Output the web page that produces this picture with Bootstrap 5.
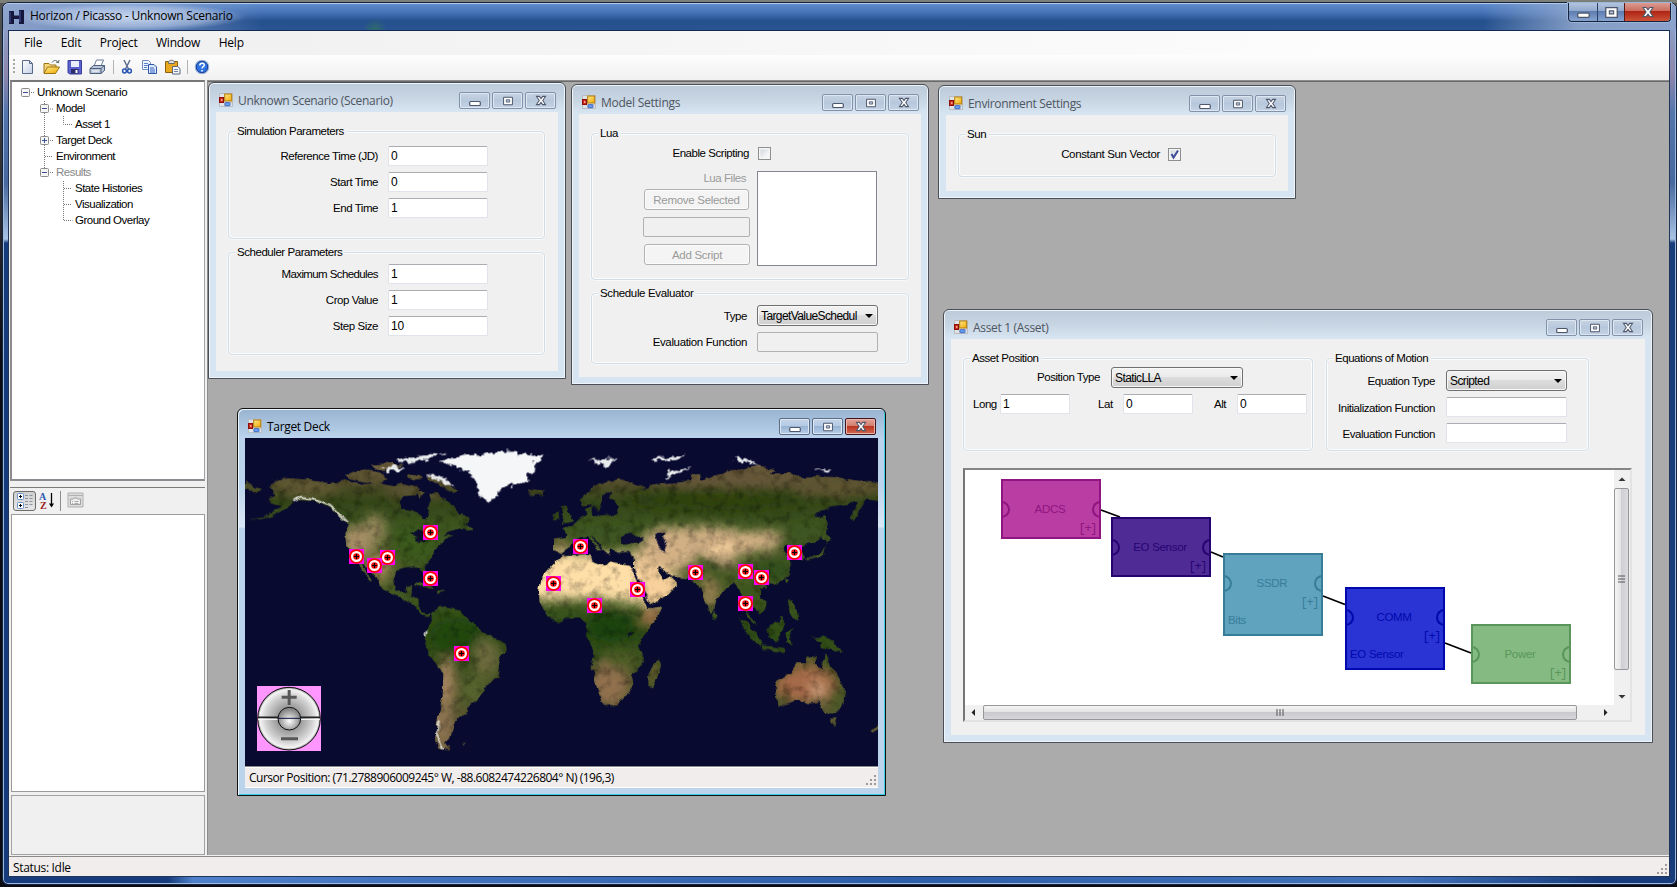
<!DOCTYPE html>
<html lang="en">
<head>
<meta charset="utf-8">
<title>Horizon / Picasso - Unknown Scenario</title>
<link href="https://cdn.jsdelivr.net/npm/bootstrap@5.3.0/dist/css/bootstrap.min.css" rel="stylesheet">
<script src="https://cdn.jsdelivr.net/npm/bootstrap@5.3.0/dist/js/bootstrap.bundle.min.js"></script>
<style>
body{width:1677px;height:887px;overflow:hidden;background:#1b1c26;font:11.5px/16px "Liberation Sans",Arial,sans-serif;letter-spacing:-.45px;color:#000}
.ui{font-family:"Open Sans","Noto Sans",sans-serif;font-size:12px;letter-spacing:-.32px}
.desk{height:887px;padding:2px 0 2px 2px;background:linear-gradient(#7c8078 0 3px,transparent 3px),linear-gradient(#555,#0b0b14 40%)}
.shell{width:1675px;height:883px;border:1px solid #16233c;border-radius:7px 7px 6px 6px;padding:0 6px 7px 5px;
 background:linear-gradient(#8fa8d2 0,#8d9cc4 30px,#8f86ad 70px,#5576ac 110px,#48699f 180px,#a9c3e4 236px,#173c7b 240px,#173c7b 868px,transparent 868px),linear-gradient(90deg,#173c7b 0 165px,#4f80cb 190px,#3f6fb8 500px,#2d5fa8 900px,#4473bb 1400px,#173c7b 1600px);
 box-shadow:inset 0 0 0 1px #9db9e0}
.topbar{height:27px;margin:0 -6px 0 -5px;padding-left:6px;border-radius:6px 6px 0 0;border-top:1px solid #b4cae9;
 background:radial-gradient(ellipse 115px 14px at 128px 13px,rgba(214,226,244,.85),rgba(190,207,235,.55) 70%,transparent),
 radial-gradient(circle 12px at 372px 26px,#2e6a6a,transparent),
 linear-gradient(90deg,rgba(150,170,208,.9) 0,rgba(140,165,210,.6) 150px,transparent 260px,transparent 1480px,rgba(150,172,208,.85) 1575px,#8ba3cc),
 linear-gradient(#5f8bcb 0,#4471b5 9px,#24508d 17px,#2a5594 27px)}
.capt{height:19px;border:1px solid #16233c;border-top:0;border-radius:0 0 4px 4px;margin:-1px 5px 0 0;box-shadow:0 0 0 1px #9cb4d8}
.capt span{display:grid;place-items:center;background:linear-gradient(#b3c4de 0,#91a8cd 45%,#5c7cb0 46%,#87a4d0);border-left:1px solid #2a4068}
.capt span:first-child{border:0;border-radius:0 0 0 4px}
.capt .x{background:linear-gradient(#dc9c91 0,#ca6a5c 45%,#ae2413 46%,#cc5339);border-radius:0 0 4px 0;border-color:#5a1a1a}
.client{width:1662px;height:847px;border:1px solid #1f3558;border-top-color:#122a52;background:#f0f0f0}
.menus{height:24px;background:linear-gradient(90deg,#f0f0f0 150px,#fdfdfd 1400px);padding-left:15px;gap:18.500px}
.menus span{letter-spacing:-.2px}
.tools{height:25px;background:linear-gradient(#fdfdfd,#f1f1f1);padding:0 0 1px 4px;border-radius:0 0 3px 3px}
.tools i{width:1px;height:14px;background:#b4b4b4}
.work{height:776px}
.side{width:196px;padding-left:1px}
.tree{height:401px;width:195px;background:#fff;border:2px solid #6d6f73;border-color:#777 #a2a2a8 #8a8c92 #8b8c90;border-right-width:1px;position:relative}
.tree svg{position:absolute;left:0;top:1px}
.tree div{height:16px;white-space:nowrap;margin-left:-1px;letter-spacing:-.5px}
.tree div:first-of-type{margin-top:2px;letter-spacing:-.4px}
.pgrid{margin-top:6px;border-top:1px solid #7b7b7b;width:195px}
.pgbar{height:26px;padding:3px 0 0 3px}
.pressed{width:23px;height:20px;border:1px solid #6c6c6c;border-radius:3px;background:linear-gradient(#cfcfcf,#e6e6e6)}
.mdi{position:relative;width:1462px;height:775px;border:1px solid #8d8d8d;border-right:0;border-bottom:0;background:#ababab;box-shadow:inset 0 1px #696969;overflow:hidden}
.state{height:20px;background:#f1edec;border-top:1px solid #8a8a8a;padding-left:4px}
.win{position:absolute;border:1px solid #4a4f55;border-radius:6px 6px 0 0;background:linear-gradient(#bccad9 0,#c9d6e4 16px,#d7e4f2 28px);box-shadow:inset 0 0 0 1px #edf4fb;padding:0 7px 7px}
.win.act{border-color:#111;background:linear-gradient(#98b3d1 0,#b9d1ea 28px,#bad2ec 29px,#bbd3ec 75px,#dbe8f5 118px,#bcd3ec 119px);box-shadow:inset 1px 1px #eef6fd,inset -1px -1px #35d0e6}
.bar{height:29px;padding-left:3px;color:#4d5661}
.act .bar{color:#000}
.bar .ttl{margin:10px 0 0 5px}
.bt{width:31px;height:17px;border:1px solid #8491ab;border-radius:2px;margin:9px 0 0 2px;box-shadow:inset 0 0 0 1px #dde7f2;display:grid;place-items:center;background:linear-gradient(#c6d3e2,#b8c8dc 50%,#c3d2e4)}
.bt.last{margin-right:2px}
.act .bt{border-color:#5c6d88;background:linear-gradient(#c3d5ea,#b4c9e2 48%,#98b4d4 50%,#b6cde8)}
.act .bt.x{border-color:#43141c;background:linear-gradient(#e3a497,#d27c6d 48%,#b93520 50%,#d46a51);box-shadow:inset 0 0 0 1px #e9b5aa}
.cl{background:#f0f0f0;height:calc(100% - 29px)}
.grp{border:1px solid #d3dde6;border-radius:4px;box-shadow:inset 0 0 0 1px #fbfcfd,0 0 0 .5px #fff}
.gcap{display:block;width:fit-content;height:16px;margin:-9px 0 0 6px;padding:0 3px 0 2px;background:#f0f0f0}
.frow{display:flex;align-items:center}
.lab{text-align:right;white-space:nowrap}
.tb.form-control{height:20px;min-height:0;padding:0 2px;font-size:12px;line-height:16px;color:#000;border:1px solid #e2e3ea;border-top-color:#abadb3;border-radius:1.5px;background:#fff;flex:none;letter-spacing:-.2px}
.tb.off{border:1px solid #b1b1b4;background:#f0f0f0;border-radius:2px}
.pb.btn{height:21px;padding:0;font-size:11.5px;line-height:18px;letter-spacing:-.3px;border:1px solid #b0b3b6;border-radius:3px;background:#f4f4f4;color:#9a9a9a;opacity:1;box-shadow:inset 0 0 0 1px #fcfcfc}
.combo{height:21px;border:1px solid #707070;border-radius:3px;background:linear-gradient(#f2f2f2,#ebebeb 48%,#dcdcdc 50%,#cfcfcf);box-shadow:inset 0 0 0 1px #f8f8f8;padding:2px 4px 0 3px;font-size:12px;line-height:16px;white-space:nowrap;flex:none;letter-spacing:-.6px}
.combo::after{content:"";float:right;border:4px solid transparent;border-top-color:#000;border-bottom:0;margin-top:6px}
.cb{width:13px;height:13px;border:1px solid #8e8f8f;background:linear-gradient(135deg,#c9cfd6,#f6f6f6 70%);box-shadow:inset 0 0 0 1.5px #f4f4f4;flex:none}
.cb svg{display:block}
.canvas{border:2px solid #696969;border-color:#858585 #e3e3e3 #e3e3e3 #767676;background:#fff;width:669px;height:254px;margin-left:12px;margin-top:17px}
.node{position:absolute;width:100px;border:2px solid;letter-spacing:-.3px;font-size:11.5px}
.node b{font-weight:400;position:absolute;left:0;right:2px;text-align:center;top:20px}
.node em{font-style:normal;position:absolute;right:3px;top:40px;font:12px/16px "Liberation Mono",monospace;letter-spacing:-1.4px}
.node u{text-decoration:none;position:absolute;left:3px;bottom:6px}
.node::before,.node::after{content:"";position:absolute;width:9px;height:17px;border:2px solid currentColor;top:20px}
.node::before{left:-2px;border-left:0;border-radius:0 9px 9px 0}
.node::after{right:-2px;border-right:0;border-radius:9px 0 0 9px}
.vs{width:16px;background:#f0f0f0}
.thumb{border:1px solid #979797;border-radius:2px;display:grid;place-items:center}
</style>
</head>
<body>
<svg width="0" height="0" class="position-absolute">
 <defs>
  <linearGradient id="gy" x2="1" y2="1"><stop stop-color="#ffe98a"/><stop offset="1" stop-color="#f0a800"/></linearGradient>
  <linearGradient id="gw" x2="1" y2="1"><stop stop-color="#fff"/><stop offset="1" stop-color="#c3cfe6"/></linearGradient>
  <symbol id="form" viewBox="0 0 14 14"><path d="M.5 .5h13v13H.5z" fill="#dfe3e8" stroke="#b9bdc2"/><path d="M.5 4.5h4.500M5.500 9.500h8M5.500 0v13" stroke="#c9c4be"/><rect x=".5" y="4.500" width="4" height="5" fill="#c52a1e" stroke="#8d1008"/><rect x="2" y="6" width="1.500" height="2" fill="#ff9a88"/><rect x="5.700" y="1" width="7" height="7" fill="url(#gy)" stroke="#b27d0c"/><rect x="6" y="9.700" width="5" height="3" rx=".5" fill="#6b9df0" stroke="#3d6cc8"/></symbol>
  <symbol id="mn" viewBox="0 0 12 12"><rect x=".7" y="6.500" width="10.600" height="4" rx="1" fill="#fff" stroke="#4d566b" stroke-width="1.200"/></symbol>
  <symbol id="mx" viewBox="0 0 12 12"><path d="M.7 1.500h10.600v9H.7z" fill="#fff" stroke="#4d566b" stroke-width="1.200"/><path d="M4 4.500h4v2.800H4z" fill="#b8c6da" stroke="#4d566b"/></symbol>
  <symbol id="cx" viewBox="0 0 12 12"><path d="M1 1.500h3.200L6 3.900l1.800-2.400H11L7.900 6 11 10.500H7.800L6 8.100l-1.800 2.400H1L4.100 6z" fill="#fff" stroke="#4d566b" stroke-width="1.100"/></symbol>
  <symbol id="tgt" viewBox="0 0 15 15"><path d="M0 0h15v15H0z" fill="#f0f"/><circle cx="7.500" cy="7.500" r="7.300" fill="#f00"/><circle cx="7.500" cy="7.500" r="5.500" fill="#fff"/><circle cx="7.500" cy="7.500" r="3.300" fill="#f01010"/><path d="M5 7.500h5M7.500 5v5" stroke="#000" stroke-width="1.100"/></symbol>
  <symbol id="grip" viewBox="0 0 11 11"><path d="M9 1h2M5 5h2M9 5h2M1 9h2M5 9h2M9 9h2" stroke="#9d9a99" stroke-width="2"/></symbol>
 </defs>
</svg>
<div class="desk">
<div class="shell">
 <header class="topbar ui d-flex">
  <svg width="16" height="16" viewBox="0 0 16 16" style="margin-top:5px"><path d="M0 2h5v4.500h5V1h5v14h-5v-5H5v5H0z" fill="#14163c"/><path d="M1 3v11M11 2v11" stroke="#4a55a0"/></svg>
  <span class="ms-1" style="padding:4px 0 0 1px;letter-spacing:-.24px">Horizon / Picasso - Unknown Scenario</span>
  <div class="capt d-flex ms-auto">
   <span style="width:28px"><svg width="13" height="13"><use href="#mn"/></svg></span><span style="width:27px"><svg width="13" height="13"><use href="#mx"/></svg></span><span class="x" style="width:46px"><svg width="12" height="12"><use href="#cx"/></svg></span>
  </div>
 </header>
 <main class="client">
  <nav class="menus ui d-flex align-items-center"><span>File</span><span>Edit</span><span>Project</span><span>Window</span><span>Help</span></nav>
  <div class="tools d-flex align-items-center">
   <svg width="3" height="16"><path d="M1 0v16" stroke="#a8a8a8" stroke-width="2" stroke-dasharray="2 2"/></svg>
   <svg style="margin-left:4px" width="16" height="16" viewBox="0 0 16 16"><path d="M2.500 1.500h7l3 3v10h-10z" fill="url(#gw)" stroke="#586a8a"/><path d="M9.500 1.500v3h3" fill="none" stroke="#586a8a"/></svg>
   <svg style="margin-left:7px" width="17" height="16" viewBox="0 0 17 16"><path d="M1 14V4.500h5l1.500 1.500H13v2" fill="#f7d578" stroke="#9b7313"/><path d="M1 14.500 4.500 8h12L12.500 14.500z" fill="url(#gy)" stroke="#9b7313"/><path d="M9 3.500c2-3 5-2.500 6 0M13 3l2.500.8L16 1" fill="none" stroke="#566"/></svg>
   <svg style="margin-left:7px" width="16" height="16" viewBox="0 0 16 16"><path d="M1 1.500h13.500V15H2.500L1 13.500z" fill="#5a60cf" stroke="#3b3f98"/><path d="M4 2h8v6H4z" fill="#e9eefb"/><path d="M4 10h7.500v4.500H4z" fill="#2a2d66"/><path d="M8.500 11h2v3h-2z" fill="#fff"/></svg>
   <svg style="margin-left:6px" width="17" height="16" viewBox="0 0 17 16"><path d="M5 7 7.500 1h7L12 7z" fill="#fff" stroke="#6a7d98"/><path d="M1 9.500 4.500 6.500H15.500v5L12 14.500H1z" fill="#b9c6d8" stroke="#4c5f7c"/><path d="M1 9.500h11v5M12 9.500l3.500-3" fill="none" stroke="#4c5f7c"/><path d="M3 12h7" stroke="#fff"/></svg>
   <i style="margin:0 5px 0 7px"></i>
   <svg width="16" height="16" viewBox="0 0 16 16"><path d="M5 1l4.500 9M11 1 6.500 10" stroke="#5d6f8e" stroke-width="1.500"/><circle cx="5.500" cy="12" r="1.900" fill="none" stroke="#2a56b4" stroke-width="1.500"/><circle cx="10.500" cy="12" r="1.900" fill="none" stroke="#2a56b4" stroke-width="1.500"/></svg>
   <svg style="margin-left:6px" width="17" height="16" viewBox="0 0 17 16"><path d="M1.500 1.500h6l2 2v7h-8z" fill="#eef4ff" stroke="#6f8fc4"/><path d="M3 4.500h4M3 6.500h5M3 8.500h3" stroke="#5b83c8"/><path d="M7.500 5.500h5.500l2.500 2.500v6.500h-8z" fill="#dbe8ff" stroke="#2f58a8"/><path d="M9 9h4M9 11h5M9 13h5" stroke="#3a68bd"/></svg>
   <svg style="margin-left:6px" width="18" height="16" viewBox="0 0 18 16"><path d="M1.500 2.500h12v11h-12z" fill="#e8a91e" stroke="#8a6110"/><path d="M4.500 3.500c0-3 6-3 6 0v1h-6z" fill="#ddd" stroke="#666"/><path d="M8.500 7.500h5l2.500 2v5.500H8.500z" fill="#f4f6fa" stroke="#5b6880"/><path d="M10 10.500h4M10 12.500h4" stroke="#7486a5"/></svg>
   <i style="margin:0 6px 0 5px"></i>
   <svg width="16" height="16" viewBox="0 0 16 16"><circle cx="8" cy="8" r="6.700" fill="#2f74e0" stroke="#9fb4d8" stroke-width="1.200"/><circle cx="8" cy="8" r="5.700" fill="none" stroke="#1a3f95"/><path d="M5.800 6.500c0-3 4.600-3 4.500-.3C10.300 7.700 8 7.700 8 9.500M8 11v1.600" fill="none" stroke="#fff" stroke-width="1.500"/></svg>
  </div>
  <div class="work d-flex">
   <aside class="side">
    <div class="tree">
     <svg width="80" height="150" fill="none" stroke="#777" stroke-dasharray="1 1">
      <path d="M19 9.500h4M38 26h3M32.500 18v71M51.500 33v8.500h9M38 57.500h3M33 73.500h8M38 89.500h3M51.500 98v39.500h9M52 105.500h8M52 121.500h8"/>
      <g stroke="#8b8b8b" stroke-dasharray="none" fill="#f6f6f6"><rect x="9.500" y="5.500" width="8" height="8" rx="1"/><rect x="28.500" y="21.500" width="8" height="8" rx="1"/><rect x="28.500" y="53.500" width="8" height="8" rx="1"/><rect x="28.500" y="85.500" width="8" height="8" rx="1"/><path d="M11 9.500h5M30 25.500h5M30 57.500h5M32.500 55v5M30 89.500h5" stroke="#3a4f95"/></g>
     </svg>
     <div style="padding-left:26px">Unknown Scenario</div><div style="padding-left:45px">Model</div><div style="padding-left:64px">Asset 1</div><div style="padding-left:45px">Target Deck</div><div style="padding-left:45px">Environment</div><div style="padding-left:45px;color:#888">Results</div><div style="padding-left:64px">State Histories</div><div style="padding-left:64px">Visualization</div><div style="padding-left:64px">Ground Overlay</div>
    </div>
    <div class="pgrid">
     <div class="pgbar d-flex">
      <span class="pressed"><svg width="21" height="18" class="d-block"><g fill="#fff" stroke="#6b94cc"><rect x="3.500" y="1.500" width="6" height="6" rx="1"/><rect x="3.500" y="10.500" width="6" height="6" rx="1"/></g><path d="M5 4.500h3M6.500 3v3M5 13.500h3M6.500 12v3" stroke="#000"/><path d="M11 3.500h3M11 6.500h3M11 9.500h3M11 12.500h3M11 15.500h3M15.500 3.500h3M15.500 6.500h3M15.500 9.500h3M15.500 12.500h3" stroke="#8a93a3"/></svg></span>
      <svg width="18" height="20" style="margin-left:3px"><text x="0" y="9" font-family="Liberation Serif" font-weight="700" font-size="10" fill="#2f56b0">A</text><text x="1" y="18" font-family="Liberation Serif" font-weight="700" font-size="10" fill="#9c2323">Z</text><path d="M12.500 2v13" stroke="#000" stroke-width="1.300"/><path d="M10 12.500h5l-2.500 4z"/></svg>
      <i style="width:1px;height:20px;background:#8c8c8c;margin:0 6px 0 3px"></i>
      <svg width="17" height="17" style="margin-top:1px"><path d="M1 1h15v14H1z" fill="#dcdcdc" stroke="#b0b0b0"/><path d="M1 3.500h15" stroke="#b0b0b0"/><path d="M3.500 7h3l.5-1h3l.5 1h3v5.500h-10z" fill="#efefef" stroke="#a2a2a2"/><path d="M5 9.500h1M7.500 9.500h4M5 11.500h1M7.500 11.500h4" stroke="#aaa"/></svg>
     </div>
     <div style="height:278px;background:#fff;border:1px solid #9b9b9b;margin-left:1px"></div>
     <div style="height:60px;border:1px solid #a2a2a2;margin:3px 0 0 1px"></div>
    </div>
   </aside>
   <section class="mdi ms-auto">

    <article class="win" style="left:0;top:1px;width:358px;height:297px">
     <div class="bar ui d-flex"><svg style="margin-top:10px" width="14" height="14"><use href="#form"/></svg><span class="ttl me-auto">Unknown Scenario (Scenario)</span><span class="bt"><svg width="12" height="12"><use href="#mn"/></svg></span><span class="bt"><svg width="12" height="10"><use href="#mx"/></svg></span><span class="bt last"><svg width="12" height="11"><use href="#cx"/></svg></span></div>
     <div class="cl" style="padding:19px 13px 0 12px">
      <div class="grp" style="height:108px"><span class="gcap">Simulation Parameters</span>
       <div class="vstack" style="gap:6px;padding-top:7px">
        <label class="frow"><span class="lab" style="width:149px;margin-right:10px">Reference Time (JD)</span><input class="form-control tb" style="width:100px" value="0"></label>
        <label class="frow"><span class="lab" style="width:149px;margin-right:10px">Start Time</span><input class="form-control tb" style="width:100px" value="0"></label>
        <label class="frow"><span class="lab" style="width:149px;margin-right:10px">End Time</span><input class="form-control tb" style="width:100px" value="1"></label>
       </div></div>
      <div class="grp" style="height:103px;margin-top:13px"><span class="gcap">Scheduler Parameters</span>
       <div class="vstack" style="gap:6px;padding-top:4px">
        <label class="frow"><span class="lab" style="width:149px;margin-right:10px;letter-spacing:-.6px">Maximum Schedules</span><input class="form-control tb" style="width:100px" value="1"></label>
        <label class="frow"><span class="lab" style="width:149px;margin-right:10px">Crop Value</span><input class="form-control tb" style="width:100px" value="1"></label>
        <label class="frow"><span class="lab" style="width:149px;margin-right:10px">Step Size</span><input class="form-control tb" style="width:100px" value="10"></label>
       </div></div>
     </div>
    </article>

    <article class="win" style="left:363px;top:3px;width:358px;height:301px">
     <div class="bar ui d-flex"><svg style="margin-top:10px" width="14" height="14"><use href="#form"/></svg><span class="ttl me-auto" style="letter-spacing:-.25px">Model Settings</span><span class="bt"><svg width="12" height="12"><use href="#mn"/></svg></span><span class="bt"><svg width="12" height="10"><use href="#mx"/></svg></span><span class="bt last"><svg width="12" height="11"><use href="#cx"/></svg></span></div>
     <div class="cl" style="padding:19px 12px 0">
      <div class="grp" style="height:147px"><span class="gcap">Lua</span>
       <div class="frow" style="height:20px;margin-top:2px"><span class="lab" style="width:157px;margin-right:9px">Enable Scripting</span><span class="cb"></span></div>
       <div class="d-flex" style="margin-top:8px">
        <div class="d-flex flex-column align-items-end" style="width:158px;margin-right:7px">
         <span style="height:15px;color:#9a9a9a;padding-right:4px;line-height:14px">Lua Files</span>
         <button class="btn pb" disabled style="width:105px;margin:3px 1px 0 0">Remove Selected</button>
         <input class="form-control tb off" disabled style="width:107px;margin-top:7px">
         <button class="btn pb" disabled style="width:106px;margin-top:7px">Add Script</button>
        </div>
        <div style="width:120px;height:95px;background:#fff;border:1px solid #828790"></div>
       </div></div>
      <div class="grp" style="height:71px;margin-top:13px"><span class="gcap" style="letter-spacing:-.35px">Schedule Evaluator</span>
       <div class="frow" style="margin-top:4px"><span class="lab" style="width:155px;margin-right:10px">Type</span><div class="combo" style="width:121px">TargetValueSchedul</div></div>
       <div class="frow" style="margin-top:6px"><span class="lab" style="width:155px;margin-right:10px;letter-spacing:-.35px">Evaluation Function</span><input class="form-control tb off" disabled style="width:121px"></div>
      </div>
     </div>
    </article>

    <article class="win" style="left:730px;top:4px;width:358px;height:114px">
     <div class="bar ui d-flex"><svg style="margin-top:10px" width="14" height="14"><use href="#form"/></svg><span class="ttl me-auto">Environment Settings</span><span class="bt"><svg width="12" height="12"><use href="#mn"/></svg></span><span class="bt"><svg width="12" height="10"><use href="#mx"/></svg></span><span class="bt last"><svg width="12" height="11"><use href="#cx"/></svg></span></div>
     <div class="cl" style="padding:19px 12px 0">
      <div class="grp" style="height:43px"><span class="gcap">Sun</span>
       <div class="frow" style="height:20px;margin-top:2px"><span class="lab" style="width:201px;margin-right:8px;letter-spacing:-.35px">Constant Sun Vector</span><span class="cb"><svg width="11" height="11"><path d="M2.500 5l2 3.500L9 1.500" fill="none" stroke="#3a4c98" stroke-width="2"/></svg></span></div>
      </div>
     </div>
    </article>

    <article class="win" style="left:735px;top:228px;width:710px;height:434px">
     <div class="bar ui d-flex"><svg style="margin-top:10px" width="14" height="14"><use href="#form"/></svg><span class="ttl me-auto">Asset 1 (Asset)</span><span class="bt"><svg width="12" height="12"><use href="#mn"/></svg></span><span class="bt"><svg width="12" height="10"><use href="#mx"/></svg></span><span class="bt last"><svg width="12" height="11"><use href="#cx"/></svg></span></div>
     <div class="cl" style="padding-top:19px">
      <div class="d-flex" style="margin-left:12px;gap:13px">
       <div class="grp" style="width:350px;height:93px"><span class="gcap">Asset Position</span>
        <div class="frow"><span class="lab" style="width:136px;margin-right:11px">Position Type</span><div class="combo" style="width:132px;margin-top:1px">StaticLLA</div></div>
        <div class="frow" style="margin-top:6px"><span style="width:27px;margin-left:9px">Long</span><input class="form-control tb" style="width:70px" value="1"><span style="width:25px;margin-left:28px">Lat</span><input class="form-control tb" style="width:70px" value="0"><span style="width:23px;margin-left:21px">Alt</span><input class="form-control tb" style="width:70px" value="0"></div>
       </div>
       <div class="grp" style="width:263px;height:93px"><span class="gcap">Equations of Motion</span>
        <div class="frow" style="margin-top:4px"><span class="lab" style="width:108px;margin-right:11px;padding-top:1px">Equation Type</span><div class="combo" style="width:121px">Scripted</div></div>
        <div class="frow" style="margin-top:6px"><span class="lab" style="width:108px;margin-right:11px;padding-top:2px">Initialization Function</span><input class="form-control tb" style="width:121px"></div>
        <div class="frow" style="margin-top:6px"><span class="lab" style="width:108px;margin-right:11px;padding-top:2px">Evaluation Function</span><input class="form-control tb" style="width:121px"></div>
       </div>
      </div>
      <div class="canvas">
       <div class="d-flex">
        <div class="position-relative" style="width:648px;height:235px;margin-left:1px">
         <svg class="position-absolute top-0 start-0" width="648" height="235"><path d="M135 40l19 7M245 82l12 5M357 126l22 8.500M479 173l26 10" stroke="#000" stroke-width="1.800"/></svg>
         <div class="node" style="left:35px;top:9px;height:60px;color:#8f1580;background:#b93da3;border-color:#8f1580"><b>ADCS</b><em>[+]</em></div>
         <div class="node" style="left:145px;top:47px;height:60px;color:#260573;background:#4f2b96;border-color:#260573"><b>EO Sensor</b><em>[+]</em></div>
         <div class="node" style="left:257px;top:83px;height:83px;color:#377d98;background:#60a3bf;border-color:#377d98"><b>SSDR</b><em>[+]</em><u>Bits</u></div>
         <div class="node" style="left:379px;top:117px;height:83px;color:#0009ae;background:#2a34d4;border-color:#0009ae"><b>COMM</b><em>[+]</em><u>EO Sensor</u></div>
         <div class="node" style="left:505px;top:154px;height:60px;color:#5a955a;background:#85bb82;border-color:#5a955a"><b>Power</b><em>[+]</em></div>
        </div>
        <div class="vs d-flex flex-column">
         <svg width="16" height="18"><path d="M4.500 11 8 7.500l3.500 3.500z" fill="#333"/></svg>
         <div class="thumb" style="height:182px;width:15px;background:linear-gradient(90deg,#f5f5f5,#e4e4e6 45%,#cfcfd3 50%,#dcdce0)"><svg width="7" height="9"><path d="M0 1h7M0 4h7M0 7h7" stroke="#555"/></svg></div>
         <svg width="16" height="34"><path d="M4.500 25h7L8 28.500z" fill="#333"/></svg>
        </div>
       </div>
       <div class="d-flex" style="height:15px;background:#f0f0f0">
        <svg width="18" height="15"><path d="M10 4v7L6.500 7.500z" fill="#222"/></svg>
        <div class="thumb" style="width:594px;background:linear-gradient(#f5f5f5,#e4e4e6 45%,#cacace 50%,#d6d6da)"><svg width="9" height="7"><path d="M1 0v7M4 0v7M7 0v7" stroke="#555"/></svg></div>
        <svg width="37" height="15"><path d="M27 4v7l3.500-3.500z" fill="#222"/></svg>
       </div>
      </div>
     </div>
    </article>

    <article class="win act" style="left:29px;top:327px;width:649px;height:388px">
     <div class="bar ui d-flex"><svg style="margin-top:10px" width="14" height="14"><use href="#form"/></svg><span class="ttl me-auto">Target Deck</span><span class="bt"><svg width="12" height="12"><use href="#mn"/></svg></span><span class="bt"><svg width="12" height="10"><use href="#mx"/></svg></span><span class="bt x last"><svg width="12" height="11"><use href="#cx"/></svg></span></div>
     <div class="cl">
      <svg class="d-block" width="633" height="328" viewBox="45 114 1899 984">
       <defs>
        <filter id="rough" x="0" y="0" width="1" height="1"><feTurbulence type="fractalNoise" baseFrequency=".035" numOctaves="4" seed="4" result="n"/><feDisplacementMap in="SourceGraphic" in2="n" scale="18" xChannelSelector="R" yChannelSelector="G" result="d"/><feColorMatrix in="n" values="1.3 0 0 0 .28  1.3 0 0 0 .28  1.3 0 0 0 .28  0 0 0 0 1" result="g"/><feComposite in="d" in2="g" operator="arithmetic" k1="1" k2="0" k3="0" k4="0"/></filter>
        <filter id="edge" x="-.1" y="-.1" width="1.2" height="1.2"><feTurbulence type="fractalNoise" baseFrequency=".05" numOctaves="4" seed="9" result="n"/><feDisplacementMap in="SourceGraphic" in2="n" scale="26" xChannelSelector="R" yChannelSelector="G"/></filter>
        <filter id="b1" x="-.5" y="-.5" width="2" height="2"><feGaussianBlur stdDeviation="16"/></filter>
        <filter id="b2" x="-.5" y="-.5" width="2" height="2"><feGaussianBlur stdDeviation="8"/></filter>
        <linearGradient id="land" gradientUnits="userSpaceOnUse" x1="0" y1="190" x2="0" y2="1050"><stop stop-color="#6f5f3d"/><stop offset=".06" stop-color="#57502f"/><stop offset=".13" stop-color="#354619"/><stop offset=".22" stop-color="#3d5520"/><stop offset=".4" stop-color="#4a5c26"/><stop offset=".6" stop-color="#2f4d16"/><stop offset="1" stop-color="#6a5c3b"/></linearGradient>
        <clipPath id="lands">
         <path d="M118 250L150 238 180 235 240 240 300 250 350 240 400 252 440 248 490 258 520 250 565 262 555 285 520 288 505 305 515 328 545 333 572 345 588 365 596 345 592 322 603 300 598 282 620 280 650 300 672 322 690 345 716 352 712 372 692 376 725 378 730 390 705 392 692 385 655 395 640 405 668 402 655 412 640 425 612 452 606 475 580 495 584 512 600 540 592 548 575 520 568 500 545 500 520 503 498 515 490 545 500 575 525 575 530 560 547 560 540 590 566 600 566 625 585 643 605 642 598 652 580 648 555 625 545 608 510 592 458 568 440 535 418 512 396 488 410 520 426 546 418 545 400 516 388 490 362 460 348 430 346 400 355 378 325 345 295 320 255 302 215 298 192 300 175 325 120 348 60 362 130 338 152 318 122 310 116 292 136 285z"/>
         <path d="M45 248l50 20-15 12-35-18zM345 225l40-15 60 5 30 20-20 15-50-5-50-10zM420 195l70-8 30 12-60 14zM590 225l50 15 45 30-10 8-40-20-45-20zM545 270l40 5-15 18zM530 222l40 0 5 16-40 0zM560 548l30 2 25 14-20 0-40-8zM620 570l28 4-25 6zM692 1028l14 2-8 4z"/>
         <path d="M605 640L630 618 690 632 722 665 745 680 755 700 790 712 825 728 830 745 808 780 803 835 770 855 745 900 715 920 712 942 680 955 668 985 660 1012 645 1028 658 1052 630 1045 615 1020 620 970 638 890 640 820 608 785 582 735 590 690 605 670z"/>
         <path d="M890 270l20-5 35 6-10 14-30 0z"/>
         <path transform="translate(900)" d="M148 300L160 290 190 260 230 245 270 237 300 245 345 262 330 272 355 265 360 255 395 250 440 248 480 245 485 225 510 222 515 240 545 232 560 225 620 210 680 195 735 208 720 220 780 220 820 235 870 230 920 232 970 240 1044 250 1060 308 1005 300 990 330 966 365 962 345 985 305 950 312 900 320 870 335 850 350 885 352 890 385 875 410 855 425 820 435 812 445 828 470 815 480 800 445 770 440 760 455 775 465 782 495 775 525 748 548 715 556 690 565 690 590 710 610 705 630 685 640 665 610 650 615 655 640 672 665 678 680 655 655 640 600 630 570 615 550 590 565 555 600 550 630 540 643 525 610 512 565 490 550 475 535 430 530 385 502 385 515 402 540 420 530 442 552 410 590 360 612 350 600 325 560 305 515 310 500 308 470 300 455 262 458 245 440 240 455 235 465 222 450 200 420 185 408 215 450 205 450 178 412 150 415 130 425 122 440 95 460 72 450 72 418 110 415 115 400 95 385 125 378 150 355 172 345 168 325 185 318 185 342 215 350 250 345 270 325 255 300 235 300 245 275 220 285 215 305 205 332 192 325 180 310 155 320z"/>
         <path transform="translate(900)" d="M95 465L130 465 178 462 185 485 225 500 240 485 290 495 305 500 320 545 345 600 355 625 397 620 385 650 335 715 325 740 338 760 338 790 305 825 310 855 290 890 260 912 222 918 205 880 195 840 182 805 190 775 188 745 165 700 170 670 150 655 110 655 80 665 50 645 28 605 28 570 35 530 65 495z"/>
         <path transform="translate(900)" d="M385 773l8 20-20 68-18-3 0-35zM88 315l22 5 22 44-38 8 5-22zM65 345l20-8 2 20-20 5zM550 632l12 10-2 16-10-4zM630 655l24 16 44 58-8 12-42-40zM695 736l72 8-4 12-66-8zM706 686l32-20 20-16 2 37-18 36-30-10zM770 698l22-14-14 22 10 30-16-4zM770 602l18 0 12 30 6 26-18-4-14-24zM838 706l20 8 26-4 28 14 26 36-32-10-36-8 6-14zM888 400l18 12-16 14-6 20-6 24-46 12 0-8 42-14 12-22zM768 533l12 4-8 16zM706 558l12 2-6 14z"/>
         <path transform="translate(900)" d="M735 845L780 820 800 790 825 790 830 770 858 775 850 795 875 808 888 760 900 800 925 830 945 870 940 910 920 940 885 940 865 905 840 910 800 900 745 920 740 880zM900 958l20 0-8 20zM1020 990l26-18 0 16-16 10zM887 425l-14-10 10-70 8 0z"/>
        </clipPath>
       </defs>
       <path d="M0 0h2000v1200H0z" fill="#090a30"/>
       <g filter="url(#rough)">
        <g clip-path="url(#lands)">
         <path d="M0 100h2000v1000H0z" fill="url(#land)"/>
         <g filter="url(#b1)">
          <ellipse cx="230" cy="265" rx="100" ry="22" fill="#655b35"/><ellipse cx="560" cy="275" rx="90" ry="25" fill="#5c5232"/>
          <ellipse cx="385" cy="425" rx="45" ry="50" fill="#a98f68"/><ellipse cx="435" cy="390" rx="34" ry="48" fill="#96895c"/><ellipse cx="450" cy="500" rx="34" ry="46" fill="#a18757"/>
          <ellipse cx="560" cy="430" rx="70" ry="60" fill="#3a5a1c"/><ellipse cx="680" cy="710" rx="80" ry="60" fill="#234611"/><ellipse cx="770" cy="770" rx="40" ry="60" fill="#6d6a3c"/><ellipse cx="650" cy="850" rx="22" ry="80" fill="#b08a66"/><ellipse cx="640" cy="970" rx="30" ry="70" fill="#8f7453"/><ellipse cx="730" cy="870" rx="40" ry="40" fill="#56652f"/>
          <g transform="translate(900)">
           <path d="M0 460h310l50 140-40 10-100-15-230 5z" fill="#ffdfa8"/><path d="M305 465l60 5 100 80-40 60-80 10z" fill="#f8d09b"/>
           <path d="M370 385l180-5 90 15 120 0-20 50-80 10-60 30-80-15-70 45-100-20-30-50z" fill="#d3b185"/><path d="M470 430l100 20 60 60-60-10-60-30z" fill="#b19673"/>
           <ellipse cx="600" cy="235" rx="240" ry="24" fill="#68593a"/><ellipse cx="920" cy="260" rx="130" ry="28" fill="#5f5433"/><ellipse cx="560" cy="300" rx="260" ry="30" fill="#2d430f"/>
           <ellipse cx="540" cy="580" rx="30" ry="50" fill="#957f51"/><ellipse cx="95" cy="435" rx="28" ry="20" fill="#8d7748"/>
           <ellipse cx="240" cy="680" rx="75" ry="45" fill="#1e430d"/><ellipse cx="365" cy="650" rx="30" ry="30" fill="#a5734d"/><ellipse cx="240" cy="850" rx="60" ry="70" fill="#90704d"/><ellipse cx="280" cy="780" rx="50" ry="30" fill="#4d5c27"/>
           <ellipse cx="830" cy="855" rx="95" ry="55" fill="#a56a48"/><ellipse cx="865" cy="870" rx="20" ry="30" fill="#cda07a"/><ellipse cx="830" cy="785" rx="50" ry="16" fill="#6b6434"/><ellipse cx="920" cy="900" rx="20" ry="50" fill="#4b5a28"/>
           <ellipse cx="730" cy="510" rx="50" ry="40" fill="#314f1a"/><ellipse cx="665" cy="590" rx="40" ry="35" fill="#3a561c"/><ellipse cx="372" cy="815" rx="12" ry="36" fill="#7b6239"/>
          </g>
         </g>
         <g filter="url(#b2)"><path d="M1435 445l60-16 25 13-50 20-50 2z" fill="#f0cc9a"/><path d="M1410 475l60 50 55-5" stroke="#3f5220" stroke-width="10" fill="none"/></g>
        </g>
        <g fill="#090a30"><path d="M1170 410l30-12 45 18-20 14-48 4zM1275 400l28-6-4 18 14 20-8 24-18-10zM540 400l30-14 18 8-12 8 4 20-16 8-4-22zM1193 695l10 4-6 14zM1204 505l10 2 42 98-8 6z"/></g>
        <path d="M190 302l22-12 42 6 48 20 50 52M590 690l-4 20M628 960l-10 40 22 48" stroke="#d7d6cc" stroke-width="6" fill="none"/>
       </g>
       <g filter="url(#edge)"><path d="M630 188L665 170 730 165 790 158 850 155 890 162 945 168 915 190 918 210 890 225 898 242 850 252 810 270 785 305 750 292 735 240 715 215 680 200z" fill="#f4f6f7"/>
        <path fill="#e8ebec" d="M1078 180l82-4-30 24-20-4zM1260 172l108-4-30 12-60 2zM1510 172l40 6 38 14-50-4zM500 180l60-15 90-6-50 16-60 16zM1300 238l20-26 70-14-60 26zM455 205l50-8 20 12-50 4zM590 222l50 10 35 26-50-16zM1755 206h50l-20 8z"/></g>
       <g>
        <use href="#tgt" x="357" y="447" width="45" height="45"/><use href="#tgt" x="450" y="450" width="45" height="45"/><use href="#tgt" x="411" y="474" width="45" height="45"/><use href="#tgt" x="579" y="375" width="45" height="45"/><use href="#tgt" x="579" y="513" width="45" height="45"/><use href="#tgt" x="672" y="738" width="45" height="45"/><use href="#tgt" x="948" y="528" width="45" height="45"/><use href="#tgt" x="1029" y="417" width="45" height="45"/><use href="#tgt" x="1071" y="594" width="45" height="45"/><use href="#tgt" x="1200" y="546" width="45" height="45"/><use href="#tgt" x="1374" y="495" width="45" height="45"/><use href="#tgt" x="1524" y="492" width="45" height="45"/><use href="#tgt" x="1572" y="510" width="45" height="45"/><use href="#tgt" x="1524" y="588" width="45" height="45"/><use href="#tgt" x="1671" y="435" width="45" height="45"/>
       </g>
       <radialGradient id="kn"><stop offset=".3" stop-color="#8f8f8f"/><stop offset=".75" stop-color="#d2d2d2"/><stop offset=".93" stop-color="#f4f4f4"/><stop offset="1" stop-color="#8a8a8a"/></radialGradient>
       <radialGradient id="kc" cy=".6"><stop stop-color="#fff"/><stop offset="1" stop-color="#888"/></radialGradient>
       <path d="M81 858h192v195H81z" fill="#ff96ff"/><circle cx="177" cy="956" r="94" fill="url(#kn)" stroke="#111" stroke-width="3"/><path d="M84 952h186" stroke="#222" stroke-width="5"/><path d="M84 958h186" stroke="#fff" stroke-width="3"/>
       <circle cx="178" cy="956" r="34" fill="url(#kc)" stroke="#111" stroke-width="3"/><path d="M144 955h68" stroke="#101440" stroke-width="3"/><path d="M155 892h45M177.500 870v45M153 1016h51" stroke="#585858" stroke-width="9"/>
      </svg>
      <div class="ui d-flex justify-content-between" style="height:22px;background:#f1edec;border-top:1px solid #8a8a8a;padding:3px 2px 0 4px;box-shadow:inset 0 1px #fff,inset 0 -1px #fff;letter-spacing:-.5px"><span>Cursor Position: (71.2788906009245° W, -88.6082474226804° N) (196,3)</span><svg width="11" height="11" style="margin-top:5px"><use href="#grip"/></svg></div>
     </div>
    </article>
   </section>
  </div>
  <footer class="state ui d-flex justify-content-between"><span style="padding-top:3px">Status: Idle</span><svg width="11" height="11" style="margin:7px 2px 0 0"><use href="#grip"/></svg></footer>
 </main>
</div>
</div>
</body>
</html>
